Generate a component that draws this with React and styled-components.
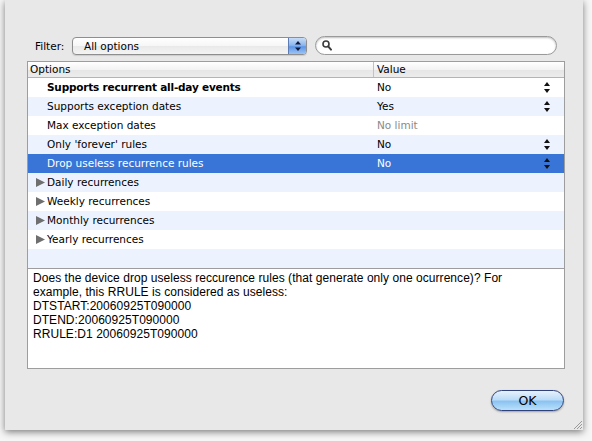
import React from "react";
import styled, { createGlobalStyle } from "styled-components";

const GlobalStyle = createGlobalStyle`
  html, body {
    margin: 0;
    padding: 0;
    background: #f6f6f6;
  }
  body {
    font-family: "DejaVu Sans", "Liberation Sans", sans-serif;
    font-size: 10.5px;
    color: #000;
  }
`;

const Stage = styled.div`
  width: 592px;
  height: 441px;
  padding-left: 5px;
  box-sizing: border-box;
  overflow: hidden;
`;

const Sheet = styled.div`
  position: relative;
  width: 578px;
  height: 430px;
  box-sizing: border-box;
  background: #e8e8e8;
  box-shadow: 0 2px 7px rgba(0, 0, 0, 0.5);
  padding: 36px 18px 0 22px;
  display: flex;
  flex-direction: column;
`;

const FilterBar = styled.div`
  display: flex;
  align-items: center;
  height: 19px;
  padding: 0 8px;
  gap: 7px;
`;

const FilterLabel = styled.span`
  width: 30px;
  font-size: 10.5px;
`;

const PopUp = styled.div`
  width: 235px;
  height: 18px;
  box-sizing: border-box;
  display: flex;
  border: 1px solid #8e8e8e;
  border-radius: 4px;
  background: linear-gradient(#ffffff, #f6f6f6 50%, #e9e9e9 51%, #f4f4f4);
  box-shadow: 0 1px 1px rgba(0, 0, 0, 0.12);
  overflow: hidden;
`;

const PopUpText = styled.span`
  flex: 1;
  padding-left: 11px;
  line-height: 16px;
`;

const PopUpCap = styled.span`
  width: 17px;
  display: flex;
  align-items: center;
  justify-content: center;
  border-left: 1px solid #5b7cb5;
  background: linear-gradient(#c8dcf7, #8db6ee 45%, #5d95e6 55%, #9cc4f4);
`;

const SearchField = styled.div`
  flex: 1;
  margin-left: 1px;
  height: 19px;
  box-sizing: border-box;
  display: flex;
  align-items: center;
  padding-left: 6px;
  border: 1px solid #9a9a9a;
  border-radius: 10px;
  background: #fff;
  box-shadow: inset 0 1px 2px rgba(0, 0, 0, 0.25);
`;

const Table = styled.div`
  margin-top: 6px;
  border: 1px solid #9d9d9d;
  background: #fff;
`;

const HeaderRow = styled.div`
  display: grid;
  grid-template-columns: 346px 1fr;
  height: 16px;
  box-sizing: border-box;
  border-bottom: 1px solid #b4b4b4;
  background: linear-gradient(#ffffff, #f3f3f3 50%, #e6e6e6 51%, #ececec);
`;

const HeaderCell = styled.div`
  padding-left: ${(p) => p.$pad}px;
  line-height: 15px;
  border-right: ${(p) => (p.$divider ? "1px solid #c2c2c2" : "none")};
`;

const Row = styled.div`
  display: grid;
  grid-template-columns: 346px 1fr;
  height: 19px;
  align-items: center;
  background: ${(p) => (p.$selected ? "#3875d7" : p.$striped ? "#edf3fe" : "#fff")};
  color: ${(p) => (p.$selected ? "#fff" : "#000")};
`;

const NameCell = styled.div`
  display: flex;
  align-items: center;
  padding-left: ${(p) => (p.$group ? 8 : 19)}px;
  padding-bottom: 1px;
  gap: 2px;
  font-weight: ${(p) => (p.$bold ? "bold" : "normal")};
  letter-spacing: ${(p) => (p.$bold ? "-0.2px" : "0")};
  white-space: nowrap;
`;

const ValueCell = styled.div`
  display: flex;
  align-items: center;
  justify-content: space-between;
  padding: 0 14px 1px 3px;
  color: ${(p) => (p.$muted ? "#8a8a8a" : "inherit")};
`;

const Description = styled.div`
  height: 100px;
  box-sizing: border-box;
  border: 1px solid #9d9d9d;
  border-top: none;
  background: #fff;
  padding: 2px 5px 0;
  font-family: "Liberation Sans", Arial, sans-serif;
  font-size: 12px;
  letter-spacing: 0.05px;
  line-height: 14px;
`;

const Footer = styled.div`
  display: flex;
  justify-content: flex-end;
  margin-top: 21px;
  padding-right: 1px;
`;

const OkButton = styled.button`
  width: 73px;
  height: 21px;
  border: 1px solid #2f427c;
  border-radius: 11px;
  padding: 0;
  font-family: "DejaVu Sans", sans-serif;
  font-size: 12.5px;
  color: #000;
  background: linear-gradient(#e6f2fd, #bcdcf8 45%, #8cc3f2 55%, #b9e1fb);
  box-shadow: 0 1px 2px rgba(0, 0, 0, 0.3);
`;

const Grip = styled.svg`
  position: absolute;
  right: 1px;
  bottom: 1px;
`;

const Stepper = () => (
  <svg width="6" height="11" viewBox="0 0 6 11">
    <polygon points="3,0 6,4 0,4" fill="#111" />
    <polygon points="0,7 6,7 3,11" fill="#111" />
  </svg>
);

const Disclosure = () => (
  <svg width="9" height="9" viewBox="0 0 9 9">
    <polygon points="0,0 9,4.5 0,9" fill="#6f6f6f" />
  </svg>
);

const rows = [
  { name: "Supports recurrent all-day events", bold: true, value: "No", stepper: true },
  { name: "Supports exception dates", value: "Yes", stepper: true },
  { name: "Max exception dates", value: "No limit", muted: true },
  { name: "Only 'forever' rules", value: "No", stepper: true },
  { name: "Drop useless recurrence rules", value: "No", stepper: true, selected: true },
  { name: "Daily recurrences", group: true },
  { name: "Weekly recurrences", group: true },
  { name: "Monthly recurrences", group: true },
  { name: "Yearly recurrences", group: true },
  { name: "", empty: true },
];

export default function App() {
  return (
    <Stage>
      <GlobalStyle />
      <Sheet>
        <FilterBar>
          <FilterLabel>Filter:</FilterLabel>
          <PopUp>
            <PopUpText>All options</PopUpText>
            <PopUpCap>
              <svg width="6" height="10" viewBox="0 0 6 10">
                <polygon points="3,0 6,3.5 0,3.5" fill="#10183a" />
                <polygon points="0,6.5 6,6.5 3,10" fill="#10183a" />
              </svg>
            </PopUpCap>
          </PopUp>
          <SearchField>
            <svg width="10" height="11" viewBox="0 0 10 11">
              <circle cx="4" cy="4" r="3" fill="none" stroke="#3c3c3c" strokeWidth="1.6" />
              <line x1="6.2" y1="6.4" x2="9" y2="9.6" stroke="#3c3c3c" strokeWidth="2" strokeLinecap="round" />
            </svg>
          </SearchField>
        </FilterBar>

        <Table>
          <HeaderRow>
            <HeaderCell $pad={2} $divider>Options</HeaderCell>
            <HeaderCell $pad={3}>Value</HeaderCell>
          </HeaderRow>
          {rows.map((r, i) => (
            <Row key={i} $striped={i % 2 === 1} $selected={r.selected}>
              <NameCell $group={r.group} $bold={r.bold}>
                {r.group && <Disclosure />}
                {r.name}
              </NameCell>
              <ValueCell $muted={r.muted}>
                <span>{r.value}</span>
                {r.stepper && <Stepper />}
              </ValueCell>
            </Row>
          ))}
        </Table>

        <Description>
          Does the device drop useless reccurence rules (that generate only one ocurrence)? For
          <br />
          example, this RRULE is considered as useless:
          <br />
          DTSTART:20060925T090000
          <br />
          DTEND:20060925T090000
          <br />
          RRULE:D1 20060925T090000
        </Description>

        <Footer>
          <OkButton>OK</OkButton>
        </Footer>

        <Grip width="9" height="9" viewBox="0 0 9 9">
          <line x1="1" y1="9" x2="9" y2="1" stroke="#9a9a9a" strokeWidth="1" />
          <line x1="4" y1="9" x2="9" y2="4" stroke="#9a9a9a" strokeWidth="1" />
          <line x1="7" y1="9" x2="9" y2="7" stroke="#9a9a9a" strokeWidth="1" />
        </Grip>
      </Sheet>
    </Stage>
  );
}
